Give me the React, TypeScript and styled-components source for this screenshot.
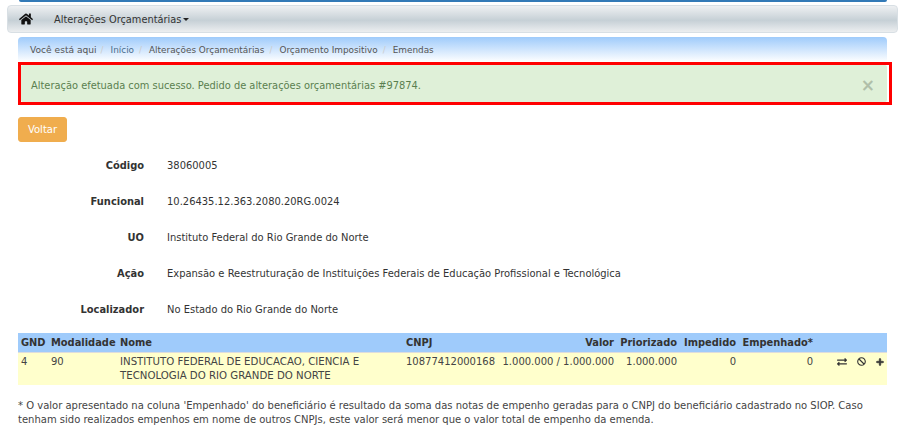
import {createGlobalStyle} from 'styled-components'
import styled from 'styled-components'
import {FaHome, FaExchangeAlt, FaBan, FaPlus} from 'react-icons/fa'

const GlobalStyle = createGlobalStyle`
    html, body {
        margin: 0;
        padding: 0;
        background: #fff;
        overflow: hidden;
    }
    body {
        font-family: "DejaVu Sans", Verdana, sans-serif;
        font-size: 10px;
        color: #333;
    }
`

const crumbs = ['Início', 'Alterações Orçamentárias', 'Orçamento Impositivo', 'Emendas']

const details = [
    {label: 'Código', value: '38060005'},
    {label: 'Funcional', value: '10.26435.12.363.2080.20RG.0024'},
    {label: 'UO', value: 'Instituto Federal do Rio Grande do Norte'},
    {label: 'Ação', value: 'Expansão e Reestruturação de Instituições Federais de Educação Profissional e Tecnológica'},
    {label: 'Localizador', value: 'No Estado do Rio Grande do Norte'},
]

export default function App() {
    return (
        <Page>
            <GlobalStyle />
            <TopLine />
            <Navbar>
                <HomeLink>
                    <FaHome size={14} />
                </HomeLink>
                <NavMenu>
                    Alterações Orçamentárias
                    <Caret />
                </NavMenu>
            </Navbar>
            <Content>
                <Breadcrumb>
                    <CrumbLead>Você está aqui</CrumbLead>
                    {crumbs.map((crumb, i) => (
                        <Crumb key={crumb} $link={i === 0}>
                            {crumb}
                        </Crumb>
                    ))}
                </Breadcrumb>
                <Highlight>
                    <Alert>
                        <AlertText>Alteração efetuada com sucesso. Pedido de alterações orçamentárias #97874.</AlertText>
                        <CloseButton>×</CloseButton>
                    </Alert>
                </Highlight>
                <BackButton>Voltar</BackButton>
                <DetailList>
                    {details.map(item => (
                        <DetailRow key={item.label}>
                            <DetailLabel>{item.label}</DetailLabel>
                            <DetailValue>{item.value}</DetailValue>
                        </DetailRow>
                    ))}
                </DetailList>
                <Table>
                    <colgroup>
                        <col style={{width: 30}} />
                        <col style={{width: 69}} />
                        <col style={{width: 286}} />
                        <col style={{width: 92}} />
                        <col style={{width: 122}} />
                        <col style={{width: 63}} />
                        <col style={{width: 59}} />
                        <col style={{width: 77}} />
                        <col />
                    </colgroup>
                    <thead>
                        <tr>
                            <Th>GND</Th>
                            <Th>Modalidade</Th>
                            <Th>Nome</Th>
                            <Th>CNPJ</Th>
                            <Th $right>Valor</Th>
                            <Th $right>Priorizado</Th>
                            <Th $right>Impedido</Th>
                            <Th $right>Empenhado*</Th>
                            <Th />
                        </tr>
                    </thead>
                    <tbody>
                        <tr>
                            <Td>4</Td>
                            <Td>90</Td>
                            <NameCell>INSTITUTO FEDERAL DE EDUCACAO, CIENCIA E TECNOLOGIA DO RIO GRANDE DO NORTE</NameCell>
                            <Td>10877412000168</Td>
                            <Td $right>1.000.000 / 1.000.000</Td>
                            <Td $right>1.000.000</Td>
                            <Td $right>0</Td>
                            <Td $right>0</Td>
                            <Td>
                                <Actions>
                                    <FaExchangeAlt size={10} />
                                    <FaBan size={9} />
                                    <FaPlus size={8} stroke="currentColor" strokeWidth={40} />
                                </Actions>
                            </Td>
                        </tr>
                    </tbody>
                </Table>
                <Note>
                    * O valor apresentado na coluna 'Empenhado' do beneficiário é resultado da soma das notas de empenho
                    geradas para o CNPJ do beneficiário cadastrado no SIOP. Caso tenham sido realizados empenhos em nome de
                    outros CNPJs, este valor será menor que o valor total de empenho da emenda.
                </Note>
            </Content>
        </Page>
    )
}

const Page = styled.div`
    width: 900px;
    height: 426px;
    overflow: hidden;
`

const TopLine = styled.div`
    height: 2px;
    margin: 0 13px 0 19px;
    background: #337ab7;
    border-radius: 0 0 3px 3px;
`

const Navbar = styled.nav`
    display: flex;
    align-items: center;
    box-sizing: border-box;
    height: 28px;
    margin: 3px 2px 0 7px;
    background: linear-gradient(to bottom, #eef0f2 0%, #c6d0d6 55%, #eceef0 100%);
    border: 1px solid #d8dfe4;
    border-radius: 4px;
`

const HomeLink = styled.span`
    display: flex;
    width: 46px;
    padding-left: 11px;
    box-sizing: border-box;
    color: #111;
`

const NavMenu = styled.span`
    display: flex;
    align-items: center;
    font-size: 9.8px;
    color: #333;
`

const Caret = styled.span`
    width: 0;
    height: 0;
    margin-left: 2px;
    border-top: 3px solid #222;
    border-left: 3px solid transparent;
    border-right: 3px solid transparent;
`

const Content = styled.main`
    width: 869px;
    margin: 4px 0 0 18px;
`

const Breadcrumb = styled.div`
    display: flex;
    align-items: center;
    box-sizing: border-box;
    height: 25px;
    padding-left: 12px;
    background: linear-gradient(to bottom, #9fcbfb 0%, #ffffff 100%);
    border-radius: 4px 4px 0 0;
    font-size: 8.9px;
    color: #555;
`

const CrumbLead = styled.span`
    margin-right: -1px;
    font-size: 9.1px;
    color: #555;
`

const Crumb = styled.span<{$link?: boolean}>`
    color: ${props => (props.$link ? '#4a6d8c' : '#555')};

    &::before {
        content: '/';
        margin: 0 7px 0 5px;
        color: #ccc;
    }
`

const Highlight = styled.div`
    box-sizing: border-box;
    width: 874px;
    height: 43px;
    border: 3px solid #ff0000;
`

const Alert = styled.div`
    display: flex;
    align-items: center;
    justify-content: space-between;
    box-sizing: border-box;
    width: 866px;
    height: 37px;
    padding: 0 12px 0 10px;
    background: #dff0d8;
    border-radius: 2px;
    font-size: 9.87px;
    color: #5a7f4f;
`

const AlertText = styled.span`
    padding-top: 3px;
`

const CloseButton = styled.span`
    padding-top: 3px;
    font-size: 17px;
    font-weight: bold;
    line-height: 1;
    color: #b0bfa9;
`

const BackButton = styled.button`
    display: block;
    width: 49px;
    height: 25px;
    margin-top: 12px;
    padding: 0;
    background: #f0ad4e;
    border: 1px solid #f0ad4e;
    border-radius: 3px;
    font-family: inherit;
    font-size: 10px;
    color: #fff;
`

const DetailList = styled.dl`
    margin: 5px 0 0;
`

const DetailRow = styled.div`
    display: flex;
    align-items: center;
    height: 36px;
`

const DetailLabel = styled.dt`
    width: 126px;
    text-align: right;
    font-size: 9.9px;
    font-weight: bold;
    color: #333;
`

const DetailValue = styled.dd`
    margin: 0 0 0 23px;
    font-size: 9.95px;
    color: #333;
`

const Table = styled.table`
    width: 869px;
    margin-top: 6px;
    border-collapse: collapse;
    table-layout: fixed;
`

const Th = styled.th<{$right?: boolean}>`
    box-sizing: border-box;
    height: 19px;
    padding: 0 3px;
    background: #9fcbfb;
    border-bottom: 1px solid #ddd;
    text-align: ${props => (props.$right ? 'right' : 'left')};
    font-size: 9.9px;
    white-space: nowrap;
    color: #333;
`

const Td = styled.td<{$right?: boolean}>`
    padding: 2px 3px;
    background: #ffffcc;
    vertical-align: top;
    text-align: ${props => (props.$right ? 'right' : 'left')};
    font-size: 10px;
    line-height: 14px;
    white-space: nowrap;
    color: #444;
`

const NameCell = styled(Td)`
    font-size: 10.2px;
    white-space: normal;
`

const Actions = styled.div`
    display: flex;
    align-items: center;
    justify-content: flex-end;
    gap: 10px;
    height: 14px;
    color: #333;
`

const Note = styled.p`
    box-sizing: border-box;
    height: 28px;
    margin: 14px 0 0;
    border-bottom: 1px solid #eee;
    font-size: 10px;
    line-height: 14px;
    color: #444;
`
